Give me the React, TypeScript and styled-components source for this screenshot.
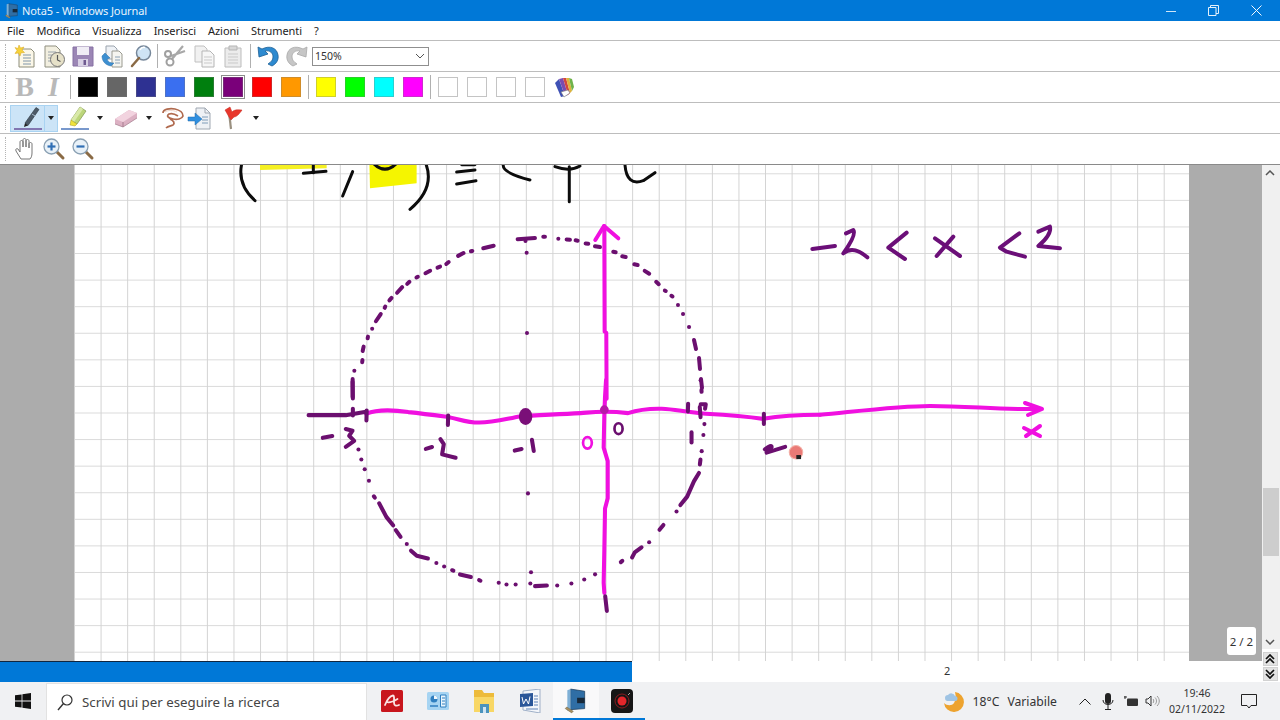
import React from 'react';
import styled, { createGlobalStyle } from 'styled-components';

const UI_FONT = '"Noto Sans", "Open Sans", "Liberation Sans", sans-serif';

const GlobalStyle = createGlobalStyle`
  html, body {
    margin: 0;
    height: 100%;
    overflow: hidden;
    background: #fff;
    font-family: ${UI_FONT};
  }
`;

const Page = styled.div`
  width: 1280px;
  height: 720px;
  display: flex;
  flex-direction: column;
  overflow: hidden;
`;

const TitleBar = styled.div`
  height: 21px;
  flex: none;
  background: #0078d7;
  color: #fff;
  display: flex;
  align-items: center;
  padding: 0 2px 0 4px;
  font-size: 11px;
  letter-spacing: -0.1px;
  gap: 2px;
`;

const TitleText = styled.span`
  flex: 1;
  opacity: 0.92;
`;

const WindowButtons = styled.div`
  display: flex;
`;

const WindowButton = styled.div`
  width: 43px;
  height: 21px;
  display: flex;
  align-items: center;
  justify-content: center;
`;

const MenuBar = styled.div`
  height: 19px;
  flex: none;
  padding: 0 0 0 7px;
  display: flex;
  align-items: center;
  gap: 12px;
  font-size: 11px;
  letter-spacing: -0.05px;
  color: #222;
  border-bottom: 1px solid #bdbdbd;
`;

const Toolbar = styled.div<{ $dark?: boolean }>`
  height: 30px;
  flex: none;
  display: flex;
  align-items: center;
  padding-left: 10px;
  position: relative;
  border-bottom: 1px solid ${(p) => (p.$dark ? '#8a8a8a' : '#bdbdbd')};

  &::before {
    content: '';
    position: absolute;
    left: 5px;
    top: 3px;
    bottom: 3px;
    border-left: 1px dotted #b5b5b5;
  }
`;

const Slot = styled.div<{ $w?: number; $ml?: number }>`
  width: ${(p) => p.$w ?? 29}px;
  margin-left: ${(p) => p.$ml ?? 0}px;
  height: 26px;
  flex: none;
  display: flex;
  align-items: center;
  justify-content: center;
`;

const Separator = styled.div<{ $w: number }>`
  width: ${(p) => p.$w}px;
  height: 24px;
  flex: none;
  display: flex;
  justify-content: center;

  &::after {
    content: '';
    width: 1px;
    background: #b0b0b0;
  }
`;

const Combo = styled.div`
  width: 117px;
  height: 19px;
  margin-left: 1px;
  box-sizing: border-box;
  border: 1px solid #8f8f8f;
  display: flex;
  align-items: center;
  justify-content: space-between;
  padding: 0 3px 0 2px;
  font-size: 10.5px;
  color: #333;
`;

const FormatLetter = styled.span<{ $italic?: boolean }>`
  font-family: "Liberation Serif", serif;
  font-size: 28px;
  line-height: 26px;
  font-weight: 700;
  font-style: ${(p) => (p.$italic ? 'italic' : 'normal')};
  color: #b9b9b9;
`;

const Swatch = styled.div<{ $color: string; $selected?: boolean }>`
  width: 20px;
  height: 20px;
  box-sizing: border-box;
  background: ${(p) => p.$color};
  border: 1px solid ${(p) => (p.$color === '#ffffff' ? '#c4c4c4' : 'rgba(120,120,120,.35)')};
  outline: ${(p) => (p.$selected ? '1px solid #8c8c8c' : 'none')};
  outline-offset: 1px;
`;

const PenButton = styled.div`
  width: 48px;
  height: 27px;
  box-sizing: border-box;
  flex: none;
  background: #cce4f7;
  border: 1px solid #a9d3f2;
  display: flex;
`;

const PenMain = styled.div`
  width: 33px;
  display: flex;
  align-items: center;
  justify-content: center;
  border-right: 1px solid #a9d3f2;
`;

const PenCaret = styled.div`
  flex: 1;
  display: flex;
  align-items: center;
  justify-content: center;
`;

const Caret = styled.div`
  width: 0;
  height: 0;
  border-left: 3.5px solid transparent;
  border-right: 3.5px solid transparent;
  border-top: 4px solid #222;
`;

const Workspace = styled.div`
  flex: 1;
  min-height: 0;
  display: flex;
`;

const MainColumn = styled.div`
  flex: 1;
  display: flex;
  flex-direction: column;
  min-width: 0;
`;

const CanvasRow = styled.div`
  height: 496px;
  flex: none;
  display: flex;
`;

const Gutter = styled.div<{ $w: number }>`
  width: ${(p) => p.$w}px;
  flex: none;
  background: #acacac;
  position: relative;
`;

const Paper = styled.div`
  flex: 1;
  position: relative;
  overflow: hidden;
  background-color: #fff;
  background-image:
    linear-gradient(to right, #d3d3d3 1px, transparent 1px),
    linear-gradient(to bottom, #dadada 1px, transparent 1px);
  background-size: 26.58px 26.58px;
  background-position: 0 8.3px;
`;

const InkLayer = styled.svg`
  position: absolute;
  inset: 0;
  width: 100%;
  height: 100%;
`;

const PageBadge = styled.div`
  position: absolute;
  right: 6px;
  top: 462px;
  width: 29px;
  height: 28px;
  background: #fff;
  border-radius: 3px;
  font-size: 11.5px;
  color: #333;
  display: flex;
  align-items: center;
  justify-content: center;
`;

const HorizontalBar = styled.div`
  flex: 1;
  position: relative;
  background: #fff;
`;

const BarFill = styled.div`
  width: 632px;
  height: 100%;
  box-sizing: border-box;
  background: #0078d7;
  border-top: 1px solid #10263f;
`;

const PageNumber = styled.span`
  position: absolute;
  left: 944px;
  top: 2px;
  font-size: 11px;
  color: #333;
`;

const RightColumn = styled.div`
  width: 18px;
  flex: none;
  display: flex;
  flex-direction: column;
  background: #fff;
`;

const ScrollTrack = styled.div`
  height: 484px;
  flex: none;
  background: #f0f0f0;
  display: flex;
  flex-direction: column;
  align-items: center;
  justify-content: space-between;
  padding: 5px 2px 4px 0;
  box-sizing: border-box;
  position: relative;
`;

const ScrollThumb = styled.div`
  position: absolute;
  left: 1px;
  right: 1px;
  top: 323px;
  height: 68px;
  background: #cdcdcd;
`;

const PageButtons = styled.div`
  display: flex;
  flex-direction: column;
  align-items: center;
  gap: 1px;
  padding: 3px 2px 0 0;
`;

const PageButton = styled.div`
  width: 15px;
  height: 14px;
  background: #e3e3e3;
  border: 1px solid #d2d2d2;
  box-sizing: border-box;
  display: flex;
  align-items: center;
  justify-content: center;
`;

const Taskbar = styled.div`
  height: 38px;
  flex: none;
  background: #f0f1f3;
  display: flex;
  align-items: center;
  color: #222;
  padding-right: 8px;
`;

const StartButton = styled.div`
  width: 46px;
  height: 38px;
  flex: none;
  display: flex;
  align-items: center;
  justify-content: center;
`;

const SearchBox = styled.div`
  width: 321px;
  height: 37px;
  margin-top: 1px;
  flex: none;
  box-sizing: border-box;
  background: #fff;
  border: 1px solid #e2e2e2;
  border-bottom: none;
  display: flex;
  align-items: center;
  padding-left: 10px;
  gap: 9px;
  font-size: 13.3px;
  color: #444;
`;

const TaskIcons = styled.div`
  display: flex;
  height: 38px;
  margin-left: 2px;
`;

const TaskIcon = styled.div<{ $active?: boolean; $open?: boolean }>`
  width: 46px;
  height: 38px;
  box-sizing: border-box;
  display: flex;
  align-items: center;
  justify-content: center;
  background: ${(p) => (p.$active ? '#f9f9fa' : 'transparent')};
  border-bottom: 2px solid ${(p) => (p.$open ? '#0078d7' : 'transparent')};
  padding-top: 2px;
`;

const Tray = styled.div`
  margin-left: auto;
  display: flex;
  align-items: center;
  height: 38px;
`;

const Weather = styled.div`
  display: flex;
  align-items: center;
  font-size: 12.2px;
  color: #333;
  margin-right: 16px;
`;

const WeatherTemp = styled.span`
  margin: 0 8px;
`;

const TrayIcon = styled.div<{ $w: number }>`
  width: ${(p) => p.$w}px;
  display: flex;
  justify-content: center;
  align-items: center;
`;

const Clock = styled.div`
  width: 60px;
  margin-left: 5px;
  text-align: center;
  font-size: 10.5px;
  line-height: 16px;
  color: #333;
`;

const NotifyButton = styled.div`
  width: 46px;
  margin-left: -1px;
  display: flex;
  justify-content: center;
`;

/* ---- toolbar icons ---- */

const Ico: React.FC<{ size?: number; w?: number; children: React.ReactNode }> = ({ size = 24, w, children }) => (
  <svg width={w ?? size} height={size} viewBox={`0 0 ${w ? (w * 24) / size : 24} 24`} fill="none">{children}</svg>
);

const NewNoteIcon = () => (
  <Ico>
    <path d="M6 5h12l3 3v15H6z" fill="#fbf7e8" stroke="#8d8d7a" />
    <path d="M10 11h8M10 14h8M10 17h8M10 20h8" stroke="#7f95aa" />
    <path d="M6 1l1.500 3L11 3 9 6l2.500 2.500-3.500.3L7 12 5.500 9 2 9.500 4 6.500 2 3.500l3 1z" fill="#f6d23c" stroke="#d9a515" strokeWidth=".5" />
  </Ico>
);

const TemplateIcon = () => (
  <Ico>
    <path d="M3 2h11l4 4v17H3z" fill="#f2efe0" stroke="#8f8f80" />
    <path d="M6 8h8M6 11h5M6 14h4M6 17h4" stroke="#9aa4ac" />
    <circle cx="15.500" cy="15.500" r="7" fill="#e6e1c8" stroke="#777" />
    <path d="M15.500 11v5l3 1.500" stroke="#555" strokeWidth="1.200" />
  </Ico>
);

const SaveIcon = () => (
  <Ico>
    <path d="M2 3h20v19H2z" fill="#9b86b5" stroke="#8670a3" />
    <path d="M6 3h12v8H6z" fill="#f0edf5" />
    <path d="M7 15h10v7H7z" fill="#d9d1e5" />
    <path d="M12.500 16h2.500v5h-2.500z" fill="#6f5a90" />
  </Ico>
);

const SendIcon = () => (
  <Ico>
    <path d="M6 2h8l3 3v10H6z" fill="#eef1f5" stroke="#9aa3ad" />
    <path d="M12 7h7l3 3v13H12z" fill="#f5f5f0" stroke="#9a9a90" />
    <path d="M15 13h5M15 16h5M15 19h5" stroke="#8aa0b5" />
    <path d="M2 12c0 5 3 9 9 10l3-3c-4 0-6-1-7-4l3-1-5-5z" fill="#3d8fd1" stroke="#2b6ea6" strokeWidth=".5" />
  </Ico>
);

const FindIcon = () => (
  <Ico>
    <circle cx="14.500" cy="9" r="7" fill="#cfe4f5" stroke="#76879a" strokeWidth="1.500" />
    <path d="M10 14L3 22" stroke="#8a6a45" strokeWidth="2.500" strokeLinecap="round" />
    <path d="M11 6c1-2 3-3 5-2.500" stroke="#fff" strokeWidth="1.500" />
  </Ico>
);

const CutIcon = () => (
  <Ico>
    <path d="M20 2L9 15M22 7L8 12" stroke="#a8a8a8" strokeWidth="2.200" />
    <circle cx="7" cy="18" r="3.500" stroke="#a0a0a0" strokeWidth="2" />
    <circle cx="5" cy="10" r="3" stroke="#a0a0a0" strokeWidth="2" />
  </Ico>
);

const CopyIcon = () => (
  <Ico>
    <path d="M3 2h9l3 3v13H3z" fill="#f1f1f1" stroke="#c0c0c0" />
    <path d="M10 7h8l4 4v12H10z" fill="#f6f6f6" stroke="#b5b5b5" />
    <path d="M12 13h8M12 16h8M12 19h8" stroke="#c9c9c9" />
  </Ico>
);

const PasteIcon = () => (
  <Ico>
    <path d="M4 4h16v19H4z" fill="#ececec" stroke="#bcbcbc" />
    <path d="M8 2h8v4H8z" fill="#d8d8d8" stroke="#b5b5b5" />
    <path d="M7 10h10M7 13h10M7 16h10M7 19h10" stroke="#c9c9c9" />
  </Ico>
);

const UndoIcon = () => (
  <Ico>
    <path d="M2 3l1 10 9-3-3-3c5-1 8 2 8 6 0 3-2 5-5 7l4 2c4-2 7-6 6-11C21 4 14 1 6 5z" fill="#2d8ad0" stroke="#1d5f94" strokeWidth=".8" />
  </Ico>
);

const RedoIcon = () => (
  <Ico>
    <path d="M22 3l-1 10-9-3 3-3c-5-1-8 2-8 6 0 3 2 5 5 7l-4 2C4 20 1 16 2 11 3 4 10 1 18 5z" fill="#c6c6c6" stroke="#a8a8a8" strokeWidth=".8" />
  </Ico>
);

const PaletteIcon = () => (
  <Ico>
    <path d="M3 8l6 14 4-1L7 4z" fill="#3f51b5" />
    <path d="M7 4l6 17 3-1L11 3z" fill="#7a4bb0" />
    <path d="M11 3l5 17 2-2L14 3z" fill="#d2453f" />
    <path d="M14 3l4 15 2-2-3-13z" fill="#e0b23c" />
    <path d="M17 3l3 13 2-4-2-8z" fill="#6fb34a" />
    <path d="M9 17l7-2 2 3-6 4z" fill="#fff" stroke="#777" strokeWidth=".6" />
  </Ico>
);

const PenIcon = () => (
  <Ico w={28}>
    <path d="M11 17L22 1.500l3 2L14 19.500z" fill="#4d5a68" stroke="#2c3742" strokeWidth=".6" />
    <path d="M18 8l3 2" stroke="#a9bccd" />
    <path d="M11 17l3 2.500-4 1.500z" fill="#222" />
    <path d="M0 23h28" stroke="#5a3a8c" strokeWidth="1.300" />
  </Ico>
);

const HighlighterIcon = () => (
  <Ico w={28}>
    <path d="M10 14L19 1l6 4-9 13z" fill="#bcd67a" stroke="#7f9550" strokeWidth=".7" />
    <path d="M19 1l3 2-9 13-3-2z" fill="#d9e9a8" />
    <path d="M10 14l6 4-2 2-5-1z" fill="#efe23a" stroke="#a89c20" strokeWidth=".5" />
    <path d="M0 23h28" stroke="#2f60b0" strokeWidth="1.300" />
  </Ico>
);

const EraserIcon = () => (
  <Ico>
    <path d="M1 13L15 4l8 3v5L9 21l-8-3z" fill="#dcb1c3" />
    <path d="M1 13L15 4l8 3L9 16z" fill="#f2d3df" />
    <path d="M9 16v5" stroke="#a77e90" />
    <path d="M1 18l8 3 14-9" stroke="#a0788a" strokeWidth=".7" />
  </Ico>
);

const LassoIcon = () => (
  <Ico>
    <path d="M2 7c0-4 7-5 12-4 5 1 8 4 8 7-1 3-6 4-10 3C7 12 5 10 8 8c3-1 6 0 9 2M9 13c4 2 5 4 3 6-2 1-5 1-7 3" stroke="#b06a4e" strokeWidth="1.700" />
    <path d="M4 6c3-2 8-2 12 0" stroke="#e7c3b2" strokeWidth=".7" />
  </Ico>
);

const InsertIcon = () => (
  <Ico>
    <path d="M9 2h9l5 5v16H9z" fill="#eef1f5" stroke="#a0a8b2" />
    <path d="M18 2v5h5" stroke="#a0a8b2" />
    <path d="M15 11h6M15 14h6M15 17h6" stroke="#7f9cb8" />
    <path d="M1 11h7V7l7 6-7 6v-4H1z" fill="#2f8fe0" stroke="#206aa8" strokeWidth=".5" />
  </Ico>
);

const FlagIcon = () => (
  <Ico>
    <path d="M8 6l2 17" stroke="#9a9080" strokeWidth="2.200" />
    <path d="M4 4l5-3 2 5c3-3 6-2 10-2-2 3-5 7-8 7l-3 3-2-3z" fill="#e8372c" stroke="#c4281f" strokeWidth=".5" />
  </Ico>
);

const HandIcon = () => (
  <Ico>
    <path d="M8 22l-5-8c-1-2 1-3 2-2l2 3V5c0-2 3-2 3 0v5-7c0-2 3-2 3 0v7-6c0-2 3-2 3 0v7-4c0-2 3-2 3 0v9c0 3-1 5-2 6z" fill="#fff" stroke="#777" />
  </Ico>
);

const ZoomIcon: React.FC<{ plus?: boolean }> = ({ plus }) => (
  <Ico>
    <path d="M14 14l7 7" stroke="#8a6a45" strokeWidth="3" strokeLinecap="round" />
    <circle cx="9.500" cy="9.500" r="7.500" fill="#e8f1f8" stroke="#8aa0b3" strokeWidth="1.300" />
    <path d="M5.500 9.500h8" stroke="#2f6fb5" strokeWidth="2.200" />
    {plus && <path d="M9.500 5.500v8" stroke="#2f6fb5" strokeWidth="2.200" />}
  </Ico>
);

const JournalIcon: React.FC<{ size?: number }> = ({ size = 16 }) => (
  <Ico size={size}>
    <path d="M7 1l13 2v16L7 20z" fill="#2f6ea5" stroke="#1f3f5e" strokeWidth=".7" />
    <path d="M4 2l3-1v19l-3 1z" fill="#7fb0d6" />
    <path d="M13 9h7v5h-7z" fill="#17293a" />
    <path d="M2 19l6 4 1.500-1.500-6-4z" fill="#a89060" stroke="#5e5236" strokeWidth=".4" />
  </Ico>
);

/* ---- ink on the page, coordinates taken from enlarged crops ---- */

// round caps make a dash longer, so pull both ends of a straight dash back in
const trimDash = (d: string): string => {
  const m = d.match(/^M([\d.]+) ([\d.]+)L([\d.]+) ([\d.]+)$/);
  if (!m) return d;
  const [x1, y1, x2, y2] = m.slice(1).map(Number);
  const len = Math.hypot(x2 - x1, y2 - y1);
  if (len < 12) return `M${(x1 + x2) / 2} ${(y1 + y2) / 2}h.1`;
  const k = 5 / len;
  const dx = (x2 - x1) * k;
  const dy = (y2 - y1) * k;
  return `M${x1 + dx} ${y1 + dy}L${x2 - dx} ${y2 - dy}`;
};

const TOP_BLACK = [
  'M125 12Q112 75 165 122',
  'M310 40L378 34', 'M340 12L340 38',
  'M458 35L428 108',
  'M678 12Q705 85 630 148',
  'M785 14L825 14', 'M770 36L825 30', 'M770 72L828 62',
  'M910 14Q905 38 990 60',
  'M1065 20Q1110 36 1140 18', 'M1108 20L1108 125',
  'M1275 14Q1280 80 1330 62L1365 38',
  'M520 10Q555 45 590 10',
];

const TOP_PURPLE = [
  'M948 238L1010 234', 'M1025 230L1040 230', 'M1070 235L1080 237', 'M1095 238L1115 240', 'M1122 240L1138 243',
  'M1152 250L1170 252', 'M1180 258L1205 262', 'M1235 274L1252 278', 'M1262 288L1282 292', 'M1298 312L1318 316',
  'M1330 330L1352 344', 'M1365 362L1380 376', 'M1390 390L1402 395', 'M1410 405L1422 412', 'M1430 432L1438 438',
  'M886 256L845 266', 'M822 272L808 275', 'M795 277L770 290', 'M750 303L735 315', 'M725 318L708 325',
  'M695 330L672 342', 'M658 348L645 355', 'M632 362L618 375', 'M610 378L588 402', 'M578 410L565 425',
  'M558 435L552 448', 'M545 458L525 488', 'M518 505L515 508', 'M505 525L502 540', 'M492 555L487 578',
  'M488 595L486 612', 'M464 628L462 637', 'M458 652L458 716',
  'M975 240L978 246', 'M980 278L980 279', 'M981 515L981 523',
];

const TOP_MAGENTA = [
  'M1213 198L1214 515L1219 518L1220 716',
  'M1186 240L1212 198L1255 235',
];

const RANGE_PURPLE = [
  'M67 117L135 108',
  'M168 70L190 60Q200 75 160 130Q190 105 232 142',
  'M350 68L295 113L345 147',
  'M435 85L510 138', 'M490 80L440 138',
  'M688 70L630 113L650 125L705 140',
  'M745 65L780 50Q785 75 745 108L810 115',
];

const AXIS_MAGENTA = [
  'M225 100C250 90 290 86 350 95C400 100 420 103 470 110C500 115 520 126 560 126C600 126 640 115 680 108C720 103 780 103 860 98C900 95 930 90 1000 98C1030 88 1060 84 1100 85C1140 86 1170 96 1230 100C1300 104 1350 108 1400 115C1440 108 1500 103 1568 103',
  'M935 0L932 50L930 100L928 200L940 240L940 350L932 380L930 500L928 600L930 630',
];

const AXIS_PURPLE = [
  'M185 0L186 60', 'M186 80L186 110', 'M55 104L165 104L225 94',
  'M227 85L226 125', 'M468 100L467 138', 'M1402 95L1402 135', 'M1178 65L1177 98',
  'M92 172L130 165',
  'M165 145L185 150L175 165L190 180L165 198',
  'M397 205L425 197', 'M445 175L455 190L450 220L490 230',
  'M660 210L690 203', 'M715 172L722 215',
  'M1188 150L1188 190',
  'M1405 205Q1425 190 1425 198L1410 215L1465 198',
  'M200 203L205 208', 'M210 230L212 240', 'M220 260L222 268', 'M232 296L235 300', 'M245 340L254 352',
  'M264 365L285 405L305 430', 'M310 440L330 468', 'M343 482L348 488', 'M358 505L375 520L408 528',
  'M428 540L438 543', 'M452 550L460 553', 'M475 561L488 566', 'M498 574L540 584', 'M555 590L568 596',
  'M617 600L618 600', 'M640 605L641 605', 'M667 605L668 605', 'M710 568L716 570', 'M710 600L712 604',
  'M720 610L765 608', 'M790 608L791 608', 'M832 602L833 602', 'M870 590L871 590', 'M900 578L905 572',
  'M975 542L987 532', 'M1012 525L1020 510L1040 495', 'M1060 480L1065 480', 'M1090 447L1108 425',
  'M1142 390L1145 388', 'M1155 370L1175 345L1195 300L1210 275', 'M1212 255L1215 230', 'M1218 210L1218 211',
  'M1223 162L1223 163', 'M1226 130L1226 131', 'M1215 0L1215 1', 'M1217 25L1218 40',
  'M1212 75L1215 115', 'M1215 72L1230 72L1228 85',
  'M932 635L938 688', 'M704 335L704 336',
];

// right side of the circle between the two crops, in page pixels
const ARC_GAP = ['M683 314h.1', 'M689 327h.1', 'M694 340L696 349', 'M699 358L700 369', 'M701 379L702 388'];

const Strokes: React.FC<{ d: string[]; color: string; width: number }> = ({ d, color, width }) => (
  <g fill="none" stroke={color} strokeWidth={width} strokeLinecap="round" strokeLinejoin="round">
    {d.map((path) => <path key={path} d={path} />)}
  </g>
);

const Ink = () => (
  <InkLayer viewBox="74 165 1115 496" preserveAspectRatio="none">
    <g transform="translate(200 160) scale(.3333)">
      <path d="M180 0H380V25L180 30Z" fill="#f5f022" />
      <path d="M508 0H650V70L510 85Z" fill="#f5f500" />
      <Strokes d={TOP_BLACK} color="#0c0c0c" width={9} />
      <Strokes d={TOP_MAGENTA} color="#f010e0" width={12} />
      <Strokes d={TOP_PURPLE.map(trimDash)} color="#6b0f6f" width={12} />
    </g>
    <g transform="translate(790 210) scale(.3333)">
      <Strokes d={RANGE_PURPLE} color="#6b0f78" width={12} />
    </g>
    <g transform="translate(290 380) scale(.338)">
      <Strokes d={AXIS_MAGENTA} color="#f010e0" width={12} />
      <Strokes d={AXIS_PURPLE.map(trimDash)} color="#6b0f6f" width={12} />
      <ellipse cx="697" cy="108" rx="20" ry="25" fill="#7a0f78" />
      <circle cx="930" cy="88" r="13" fill="#b818a8" />
      <ellipse cx="880" cy="186" rx="13" ry="17" fill="none" stroke="#f010e0" strokeWidth="8" />
      <ellipse cx="972" cy="144" rx="12" ry="16" fill="none" stroke="#6b0f6f" strokeWidth="8" />
      <circle cx="1497" cy="214" r="20" fill="#ea7a76" stroke="#f3b0a8" strokeWidth="3" />
      <path d="M1498 222h14v12h-14z" fill="#222" />
    </g>
    <Strokes
      d={[
        'M820 414.800C860 411 900 406 930 406C970 406 1000 410 1040 409',
        'M1025 403L1042 409L1028 415',
        'M1024 428L1040 436', 'M1026 436L1040 426',
      ]}
      color="#f010e0"
      width={4}
    />
    <Strokes d={ARC_GAP} color="#6b0f6f" width={4} />
  </InkLayer>
);

const FIRST_COLORS = ['#000000', '#666666', '#2e3192', '#3a6ff0', '#007f0e', '#7a007a', '#ff0000', '#ff9800'];
const SECOND_COLORS = ['#ffff00', '#00ff00', '#00ffff', '#ff00ff'];
const CUSTOM_COLORS = ['#ffffff', '#ffffff', '#ffffff', '#ffffff'];

const MENU_ITEMS = ['File', 'Modifica', 'Visualizza', 'Inserisci', 'Azioni', 'Strumenti', '?'];

export default function App() {
  return (
    <Page>
      <GlobalStyle />

      <TitleBar>
        <JournalIcon />
        <TitleText>Nota5 - Windows Journal</TitleText>
        <WindowButtons>
          <WindowButton>
            <svg width="10" height="10" viewBox="0 0 10 10"><path d="M0 5.500h10" stroke="#cfe6f8" /></svg>
          </WindowButton>
          <WindowButton>
            <svg width="11" height="11" viewBox="0 0 11 11" fill="none"><path d="M.5 2.500h7.500v8H.5zM2.500 2.500V.5h8v8H8" stroke="#e4f1fb" /></svg>
          </WindowButton>
          <WindowButton>
            <svg width="11" height="11" viewBox="0 0 11 11"><path d="M.5.5l10 10M10.500.5l-10 10" stroke="#f2f8fd" /></svg>
          </WindowButton>
        </WindowButtons>
      </TitleBar>

      <MenuBar>
        {MENU_ITEMS.map((item) => <span key={item}>{item}</span>)}
      </MenuBar>

      <Toolbar>
        <Slot><NewNoteIcon /></Slot>
        <Slot><TemplateIcon /></Slot>
        <Slot><SaveIcon /></Slot>
        <Slot><SendIcon /></Slot>
        <Slot><FindIcon /></Slot>
        <Separator $w={5.5} />
        <Slot><CutIcon /></Slot>
        <Slot><CopyIcon /></Slot>
        <Slot><PasteIcon /></Slot>
        <Separator $w={5.5} />
        <Slot><UndoIcon /></Slot>
        <Slot><RedoIcon /></Slot>
        <Combo>
          150%
          <svg width="10" height="6" viewBox="0 0 10 6" fill="none"><path d="M1 1l4 4 4-4" stroke="#555" /></svg>
        </Combo>
      </Toolbar>

      <Toolbar>
        <Slot><FormatLetter>B</FormatLetter></Slot>
        <Slot><FormatLetter $italic>I</FormatLetter></Slot>
        <Separator $w={5.5} />
        {FIRST_COLORS.map((color) => (
          <Slot key={color}><Swatch $color={color} $selected={color === '#7a007a'} /></Slot>
        ))}
        <Separator $w={6} />
        {SECOND_COLORS.map((color) => <Slot key={color}><Swatch $color={color} /></Slot>)}
        <Separator $w={6} />
        {CUSTOM_COLORS.map((color, i) => <Slot key={i}><Swatch $color={color} /></Slot>)}
        <Slot><PaletteIcon /></Slot>
      </Toolbar>

      <Toolbar>
        <PenButton>
          <PenMain><PenIcon /></PenMain>
          <PenCaret><Caret /></PenCaret>
        </PenButton>
        <Slot $ml={2}><HighlighterIcon /></Slot>
        <Slot $w={22}><Caret /></Slot>
        <Slot><EraserIcon /></Slot>
        <Slot $w={18}><Caret /></Slot>
        <Slot><LassoIcon /></Slot>
        <Slot $w={24}><InsertIcon /></Slot>
        <Slot $ml={7}><FlagIcon /></Slot>
        <Slot $w={18}><Caret /></Slot>
      </Toolbar>

      <Toolbar $dark>
        <Slot><HandIcon /></Slot>
        <Slot><ZoomIcon plus /></Slot>
        <Slot><ZoomIcon /></Slot>
      </Toolbar>

      <Workspace>
        <MainColumn>
          <CanvasRow>
            <Gutter $w={74} />
            <Paper><Ink /></Paper>
            <Gutter $w={73}>
              <PageBadge>2 / 2</PageBadge>
            </Gutter>
          </CanvasRow>
          <HorizontalBar>
            <BarFill />
            <PageNumber>2</PageNumber>
          </HorizontalBar>
        </MainColumn>

        <RightColumn>
          <ScrollTrack>
            <svg width="10" height="6" viewBox="0 0 10 6" fill="none"><path d="M1 5l4-4 4 4" stroke="#555" strokeWidth="1.500" /></svg>
            <ScrollThumb />
            <svg width="10" height="6" viewBox="0 0 10 6" fill="none"><path d="M1 1l4 4 4-4" stroke="#555" strokeWidth="1.500" /></svg>
          </ScrollTrack>
          <PageButtons>
            <PageButton>
              <svg width="10" height="10" viewBox="0 0 10 10" fill="none"><path d="M1 5l4-4 4 4M1 9l4-4 4 4" stroke="#111" strokeWidth="1.700" /></svg>
            </PageButton>
            <PageButton>
              <svg width="10" height="10" viewBox="0 0 10 10" fill="none"><path d="M1 1l4 4 4-4M1 5l4 4 4-4" stroke="#111" strokeWidth="1.700" /></svg>
            </PageButton>
          </PageButtons>
        </RightColumn>
      </Workspace>

      <Taskbar>
        <StartButton>
          <svg width="16" height="16" viewBox="0 0 16 16"><path d="M0 2.300l6.600-.9v6.200H0zM7.400 1.300L16 0v7.600H7.400zM0 8.400h6.600v6.200L0 13.700zM7.400 8.400H16V16l-8.600-1.300z" fill="#111" /></svg>
        </StartButton>
        <SearchBox>
          <svg width="16" height="17" viewBox="0 0 16 17" fill="none"><circle cx="10" cy="6" r="5" stroke="#333" strokeWidth="1.200" /><path d="M6.500 9.500L1 16" stroke="#333" strokeWidth="1.400" /></svg>
          Scrivi qui per eseguire la ricerca
        </SearchBox>
        <TaskIcons>
          <TaskIcon>
            <svg width="22" height="22" viewBox="0 0 22 22" fill="none"><rect width="22" height="22" rx="1.500" fill="#c8161d" /><path d="M4 15C6 10 9 6 12 5.500c1.500 0 1 4 1 7 0 3 2 4 5 2.500M5.500 12c3 1 6 0 11-3" stroke="#fbe4e4" strokeWidth="1.800" strokeLinecap="round" /></svg>
          </TaskIcon>
          <TaskIcon>
            <svg width="22" height="18" viewBox="0 0 22 18"><rect width="22" height="18" rx="1.500" fill="#a6d4f2" /><circle cx="7" cy="7" r="3.500" fill="#2f7fc0" /><path d="M7 7V3.500A3.500 3.500 0 0 1 10.500 7z" fill="#f2f8fc" /><path d="M3 14h8" stroke="#2f7fc0" strokeWidth="1.500" /><path d="M13.500 3h5.500v12h-5.500z" fill="#e9f5fc" stroke="#2f7fc0" /><path d="M15 6h3M15 9h3M15 12h3" stroke="#2f7fc0" /></svg>
          </TaskIcon>
          <TaskIcon>
            <svg width="22" height="24" viewBox="0 0 22 24"><path d="M1 1h8l2 3h10v18H1z" fill="#edbb3a" /><path d="M1 8h20v15H1z" fill="#f8d765" /><path d="M7 15h9v9H7z" fill="#4a93bd" /><path d="M10 18h3v6h-3z" fill="#d0e4f2" /></svg>
          </TaskIcon>
          <TaskIcon>
            <svg width="22" height="24" viewBox="0 0 22 24"><path d="M4 2l17-2v24L4 21z" fill="#f4f6fa" stroke="#9fb0c8" /><path d="M1 5l13-1v13L1 18z" fill="#2a5699" /><path d="M3 8l1.500 7L7 10l2.500 5L11 7.500" stroke="#fff" fill="none" /><path d="M15 7h4M15 10h4M15 13h4M15 16h4M7 20h12" stroke="#5f83b8" /></svg>
          </TaskIcon>
          <TaskIcon $active $open><JournalIcon size={26} /></TaskIcon>
          <TaskIcon $open>
            <svg width="22" height="24" viewBox="0 0 22 24" fill="none"><rect width="22" height="24" rx="4" fill="#161616" /><circle cx="11" cy="12" r="4.500" fill="#e3262b" /><circle cx="11" cy="12" r="7" stroke="#8a1c20" /><path d="M17 6l2-2" stroke="#aaa" /></svg>
          </TaskIcon>
        </TaskIcons>
        <Tray>
          <Weather>
            <svg width="22" height="24" viewBox="0 0 22 24"><path d="M12 3a10 10 0 1 1-11 11c3 3 8 3 10 0s2-7 1-11z" fill="#eda32f" /><path d="M2 9a3 3 0 0 1 3-3 4 4 0 0 1 7 1 2.500 2.500 0 0 1 0 5H4a2.800 2.800 0 0 1-2-3z" fill="#9fc4e4" /></svg>
            <WeatherTemp>18°C</WeatherTemp>
            Variabile
          </Weather>
          <TrayIcon $w={23}>
            <svg width="12" height="7" viewBox="0 0 12 7" fill="none"><path d="M.5 6.500L6 1l5.500 5.500" stroke="#222" /></svg>
          </TrayIcon>
          <TrayIcon $w={23}>
            <svg width="12" height="17" viewBox="0 0 12 17" fill="none"><rect x="3" y="0" width="6" height="11" rx="3" fill="#222" /><path d="M1 7c0 6 10 6 10 0M6 12v4M3 16.500h6" stroke="#222" /></svg>
          </TrayIcon>
          <TrayIcon $w={23}>
            <svg width="16" height="11" viewBox="0 0 16 11" fill="none"><rect x="4" y="2.500" width="11" height="7.500" rx="1" fill="#333" /><path d="M1 1h3M2 0v3" stroke="#333" /></svg>
          </TrayIcon>
          <TrayIcon $w={20}>
            <svg width="15" height="12" viewBox="0 0 15 12" fill="none"><path d="M1 4h2l3-3v10L3 8H1z" stroke="#333" /><path d="M8 4c1 1 1 3 0 4M10 2.500c2 2 2 5 0 7M12 1c3 3 3 7 0 10" stroke="#999" /></svg>
          </TrayIcon>
          <Clock>19:46<br />02/11/2022</Clock>
          <NotifyButton>
            <svg width="16" height="15" viewBox="0 0 16 15" fill="none"><path d="M.5.5h15v11H10L8 14l-2-2.500H.5z" stroke="#222" /></svg>
          </NotifyButton>
        </Tray>
      </Taskbar>
    </Page>
  );
}
